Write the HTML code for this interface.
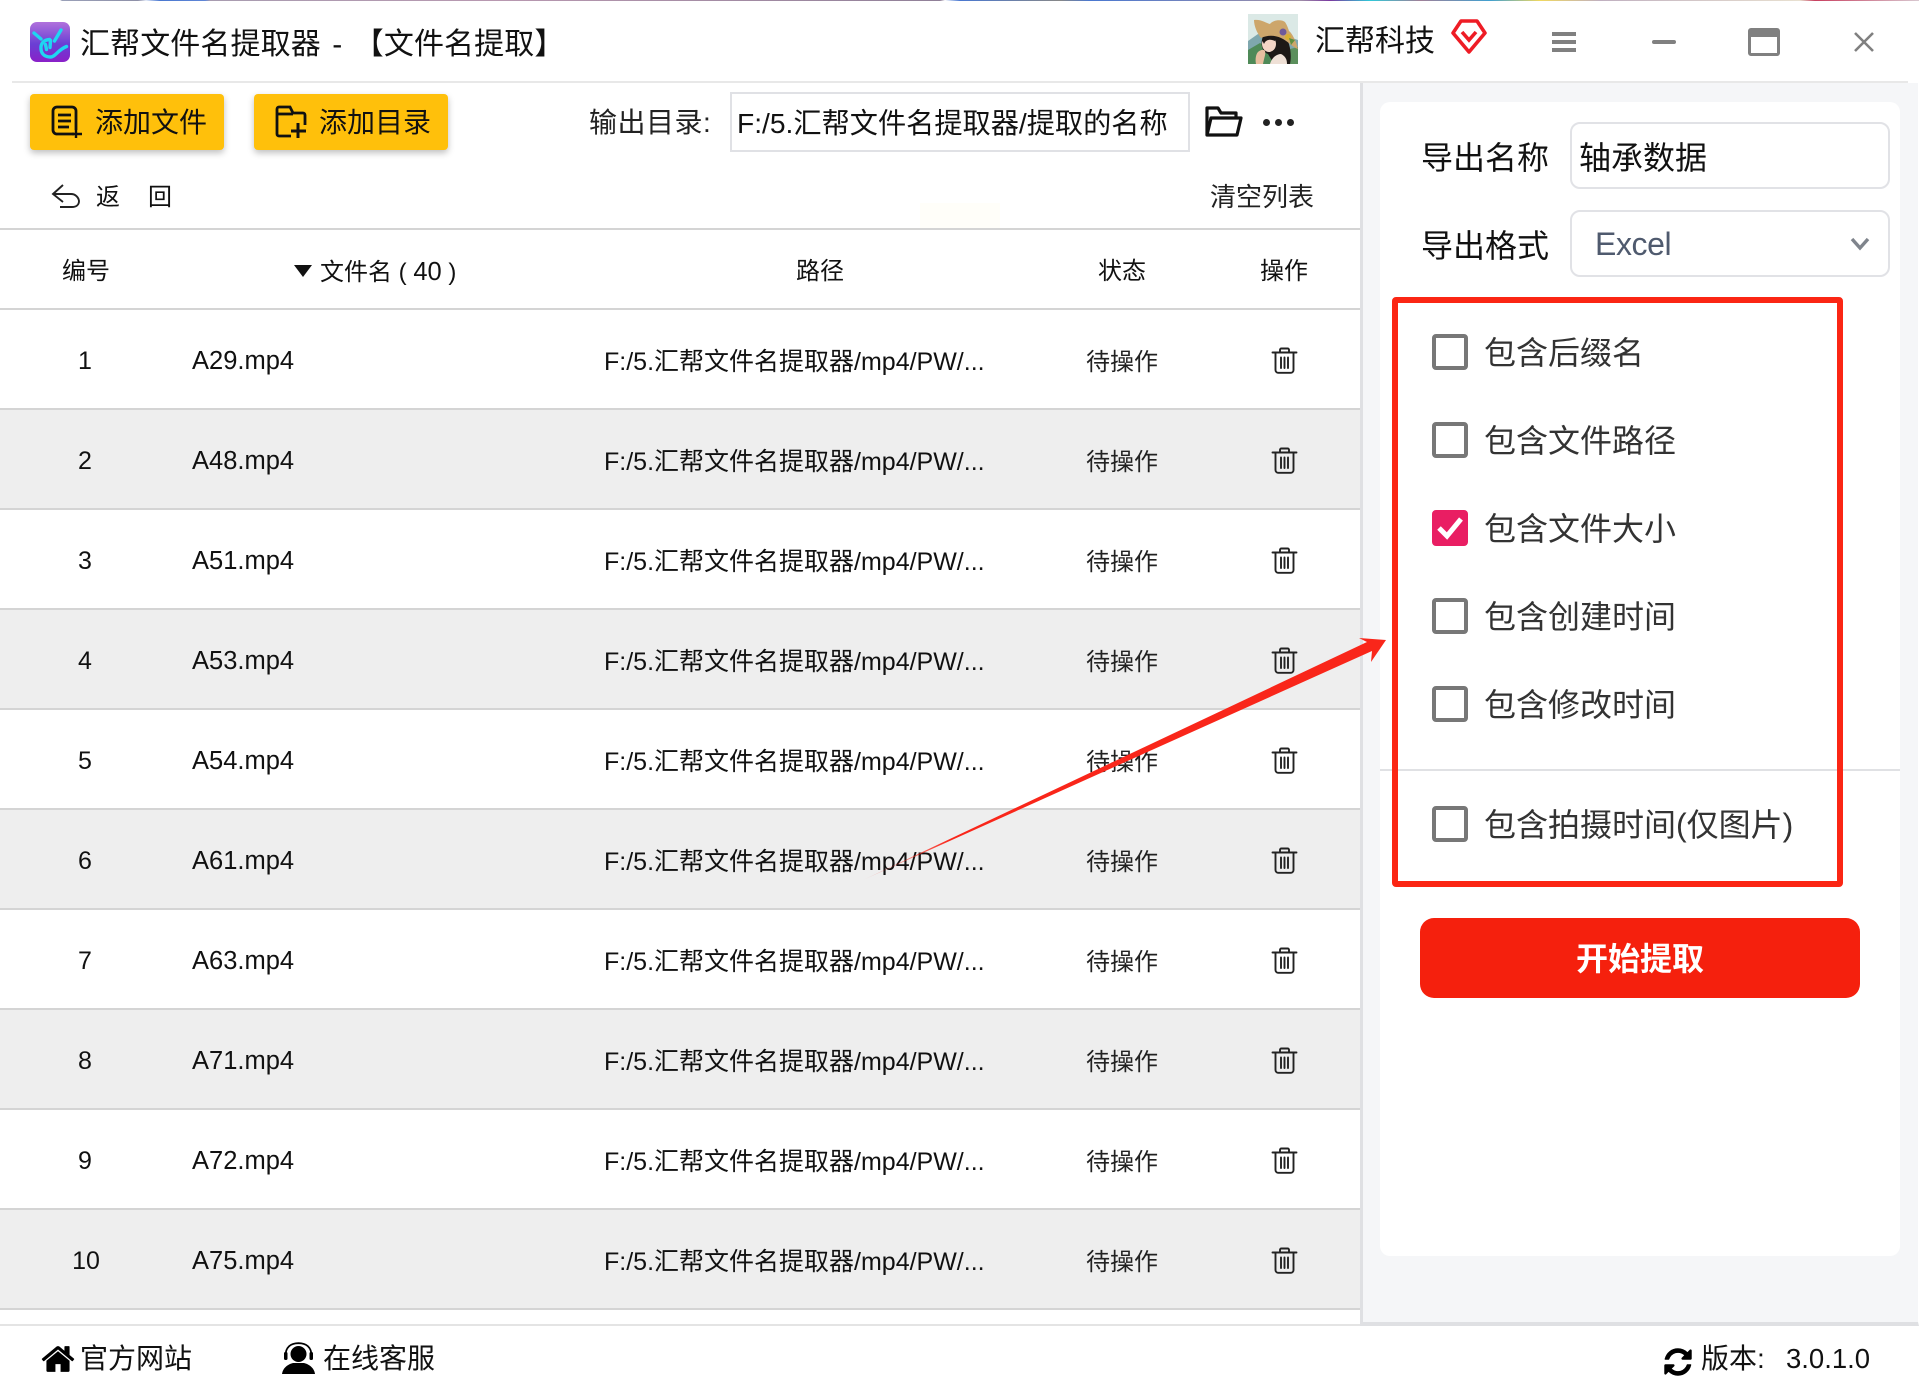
<!DOCTYPE html>
<html lang="zh-CN">
<head>
<meta charset="utf-8">
<title>汇帮文件名提取器</title>
<style>
html,body{margin:0;padding:0;background:#fff}
body{width:1919px;height:1391px;position:relative;overflow:hidden;font-family:"Liberation Sans","Noto Sans CJK SC",sans-serif;color:#111}
.a{position:absolute}
.t{position:absolute;white-space:nowrap;height:40px;line-height:40px}
.line{position:absolute;left:0;width:1360px;height:2px;background:#d4d4d4}
.btn{position:absolute;top:94px;width:194px;height:56px;background:#ffc00b;border-radius:4px;box-shadow:0 3px 7px rgba(0,0,0,.25)}
.row{position:absolute;left:0;width:1360px;height:100px;font-size:24px;border-bottom:0}
.row.g{background:#eeeeee}
.row .t{top:32px}
.row .n{left:45px;width:80px;text-align:center;font-size:25px;top:31px}
.row .f{left:192px;font-size:25.500px;top:31px}
.p{left:604px;font-size:25px}
.row .s{left:1086px;font-size:24px;color:#222;top:33px}
.row svg{position:absolute;left:1271px;top:37px}
.cb{position:absolute;left:1432px;width:36px;height:36px;box-sizing:border-box;border:4px solid #777;border-radius:4px;background:#fff}
.lb{position:absolute;left:1484px;font-size:32px;height:44px;line-height:46px;color:#333;white-space:nowrap}
</style>
</head>
<body>
<svg width="0" height="0" style="position:absolute"><defs>
<symbol id="tr" viewBox="0 0 27 27"><g fill="none" stroke="#222" stroke-width="1.900" stroke-linecap="round"><path d="M1.500 5.500H25.500"/><path d="M9 5.500V2.800a1.300 1.300 0 0 1 1.300-1.300h6.400a1.300 1.300 0 0 1 1.300 1.300V5.500"/><path d="M4.500 5.500V23a2.800 2.800 0 0 0 2.800 2.800h12.400a2.800 2.800 0 0 0 2.800-2.800V5.500"/><path d="M10 10.500V21M13.500 10.500V21M17 10.500V21"/></g></symbol>
</defs></svg>

<!-- top strip -->
<div class="a" style="left:0;top:0;width:1919px;height:1px;background:linear-gradient(90deg,#fff 0,#fff 60px,#9aa0b8 62px,#8e90a8 138px,#e6ecf8 146px,#4a78d0 160px,#5f86d6 205px,#a89cb0 210px,#b898b0 500px,#908098 940px,#fff 945px,#4a78d0 960px,#888 1060px,#4a78d0 1090px,#a090a8 1300px,#7a3aa0 1330px,#30c8d8 1370px,#a08098 1420px,#40a0d0 1490px,#f0d860 1540px,#c0b0c0 1600px,#e8e0d0 1800px,#c84060 1815px,#d8c8d0 1919px)"></div>

<!-- logo + title -->
<svg class="a" style="left:30px;top:22px" width="40" height="40" viewBox="0 0 40 40">
<defs><linearGradient id="lg" x1="0" y1="0" x2="0" y2="1"><stop offset="0" stop-color="#b071dc"/><stop offset=".55" stop-color="#6a3fd4"/><stop offset="1" stop-color="#8a20c8"/></linearGradient></defs>
<rect width="40" height="40" rx="7" fill="url(#lg)"/>
<g fill="none" stroke="#1fd6f2" stroke-width="3.400" stroke-linecap="round"><path d="M4 11l7 6"/><path d="M31 8l-6.500 11"/><path d="M19.500 17.500C14 18 10.500 21 11 27c.5 6 5 8 9.500 8 5 0 7-7 16-10.500"/><path d="M15.500 22.500l1 5M20.500 18.500l-.5 7"/></g>
</svg>
<div class="t" style="left:80px;top:25px;font-size:30px;word-spacing:3px;letter-spacing:.1px">汇帮文件名提取器 - 【文件名提取】</div>

<!-- avatar -->
<svg class="a" style="left:1248px;top:14px" width="50" height="50" viewBox="0 0 50 50">
<rect width="50" height="50" fill="#dbe9e6"/>
<path d="M0 27L10 20 22 26 38 22 50 26V50H0Z" fill="#7fa7ae"/>
<path d="M0 36L12 29 24 36 24 50H0Z" fill="#4f8a58"/>
<path d="M38 36L50 33V50H38Z" fill="#5b8f5c"/>
<path d="M15 22C12 30 14 38 20 40L26 50H42C44 40 42 28 36 20Z" fill="#1d1816"/>
<path d="M22 50c2-7 7-10 11-10 4 2 6 5 6 10z" fill="#efe0d6"/>
<ellipse cx="21" cy="30" rx="7" ry="8" fill="#f3d5c6"/>
<path d="M8 50c-1-5 0-10 2-12 2-2 6-3 7-1 1 3-1 7-2 13z" fill="#e8bfa0"/>
<path d="M14 26c3-5 10-6 14-3l-1 4c-4-2-9-2-11 3z" fill="#1d1816"/>
<path d="M6 6C13 5 18 9 22 10 25 6 33 5 37 8 39 11 40 14 41 17 45 20 49 30 50 35 44 33 40 27 33 24 27 21 19 21 13 24 9 19 6 12 6 6Z" fill="#cda66b"/>
<circle cx="35" cy="18" r="3.500" fill="#6e5a9a"/><circle cx="40" cy="23" r="3" fill="#d8b030"/><path d="M41 24l6 2-4 5z" fill="#5e8f3f"/>
</svg>
<div class="t" style="left:1315px;top:22px;font-size:30px">汇帮科技</div>
<svg class="a" style="left:1451px;top:19px" width="36" height="36" viewBox="0 0 36 36"><path d="M10 2H26L34 14 18 33 2 14Z" fill="#fff" stroke="#ee1c25" stroke-width="3.600" stroke-linejoin="round"/><path d="M11 13l7 8 7-8" fill="none" stroke="#ee1c25" stroke-width="3.600"/></svg>
<div class="a" style="left:1552px;top:32px;width:24px;height:20px;background:repeating-linear-gradient(180deg,#808080 0,#808080 4px,transparent 4px,transparent 8px)"></div>
<div class="a" style="left:1652px;top:40px;width:24px;height:4px;background:#808080;border-radius:2px"></div>
<div class="a" style="left:1748px;top:28px;width:32px;height:28px;box-sizing:border-box;border:3px solid #808080;border-top-width:9px;border-radius:3px"></div>
<svg class="a" style="left:1853px;top:32px" width="22" height="20" viewBox="0 0 22 20"><path d="M2 1L20 19M20 1L2 19" stroke="#808080" stroke-width="2.600"/></svg>
<div class="a" style="left:12px;top:81px;width:1896px;height:2px;background:#e8e8e8"></div>

<!-- toolbar -->
<div class="btn" style="left:30px"></div>
<div class="btn" style="left:254px"></div>
<svg class="a" style="left:50px;top:105px" width="33" height="34" viewBox="0 0 33 34" fill="none" stroke="#111" stroke-width="2.800"><path d="M24 29H7a4 4 0 0 1-4-4V6a4 4 0 0 1 4-4h15a4 4 0 0 1 4 4v19"/><path d="M8 10H21M8 16H21M8 22H19"/><path d="M26 25V33M22 29H32" stroke-width="2.400"/></svg>
<svg class="a" style="left:274px;top:105px" width="34" height="34" viewBox="0 0 34 34" fill="none" stroke="#111" stroke-width="2.800"><path d="M17 31H5a2 2 0 0 1-2-2V4a2 2 0 0 1 2-2h11l3 6h10a2 2 0 0 1 2 2v10"/><path d="M3 9H19"/><path d="M24 18V33M17 26H32" stroke-width="3"/></svg>
<div class="t" style="left:95px;top:103px;font-size:28px">添加文件</div>
<div class="t" style="left:319px;top:103px;font-size:28px">添加目录</div>
<div class="t" style="left:589px;top:103px;font-size:28px;color:#222;letter-spacing:.5px">输出目录:</div>
<div class="a" style="left:730px;top:92px;width:460px;height:60px;box-sizing:border-box;border:2px solid #e0e1e5"></div>
<div class="t" style="left:737px;top:103px;font-size:28.200px">F:/5.汇帮文件名提取器/提取的名称</div>
<svg class="a" style="left:1205px;top:106px" width="38" height="32" viewBox="0 0 38 32" fill="none" stroke="#111" stroke-width="3.200" stroke-linejoin="round"><path d="M2 29V2h11l3 5h15v5"/><path d="M2 29L6 12H36L32 29Z"/></svg>
<div class="a" style="left:1263px;top:119px;width:7px;height:7px;border-radius:50%;background:#222;box-shadow:12px 0 0 #222,24px 0 0 #222"></div>

<svg class="a" style="left:51px;top:183px" width="30" height="26" viewBox="0 0 30 26" fill="none" stroke="#222" stroke-width="1.900"><path d="M12 2L2 11l10 8"/><path d="M2 11H20a8 8 0 0 1 8 7c0 4-3 6-7 6H9"/></svg>
<div class="t" style="left:96px;top:178px;font-size:24px">返</div>
<div class="t" style="left:148px;top:178px;font-size:24px">回</div>
<div class="t" style="left:1210px;top:177px;font-size:26px;color:#222">清空列表</div>
<div class="a" style="left:920px;top:203px;width:80px;height:25px;background:#fffef9"></div>

<!-- table header -->
<div class="line" style="top:228px"></div>
<div class="t" style="left:62px;top:252px;font-size:24px">编号</div>
<svg class="a" style="left:294px;top:265px" width="18" height="12" viewBox="0 0 18 12"><path d="M0 0H18L9 12Z" fill="#111"/></svg>
<div class="t" style="left:320px;top:252px;font-size:24px">文件名 ( <span style="font-size:25.500px">40</span> )</div>
<div class="t" style="left:796px;top:252px;font-size:24px">路径</div>
<div class="t" style="left:1098px;top:252px;font-size:24px">状态</div>
<div class="t" style="left:1260px;top:252px;font-size:24px">操作</div>
<div class="line" style="top:308px"></div>

<!-- rows -->
<div class="row" style="top:310px"><div class="t n">1</div><div class="t f">A29.mp4</div><div class="t p">F:/5.汇帮文件名提取器/mp4/PW/...</div><div class="t s">待操作</div><svg width="27" height="27"><use href="#tr"/></svg></div>
<div class="line" style="top:408px"></div>
<div class="row g" style="top:410px"><div class="t n">2</div><div class="t f">A48.mp4</div><div class="t p">F:/5.汇帮文件名提取器/mp4/PW/...</div><div class="t s">待操作</div><svg width="27" height="27"><use href="#tr"/></svg></div>
<div class="line" style="top:508px"></div>
<div class="row" style="top:510px"><div class="t n">3</div><div class="t f">A51.mp4</div><div class="t p">F:/5.汇帮文件名提取器/mp4/PW/...</div><div class="t s">待操作</div><svg width="27" height="27"><use href="#tr"/></svg></div>
<div class="line" style="top:608px"></div>
<div class="row g" style="top:610px"><div class="t n">4</div><div class="t f">A53.mp4</div><div class="t p">F:/5.汇帮文件名提取器/mp4/PW/...</div><div class="t s">待操作</div><svg width="27" height="27"><use href="#tr"/></svg></div>
<div class="line" style="top:708px"></div>
<div class="row" style="top:710px"><div class="t n">5</div><div class="t f">A54.mp4</div><div class="t p">F:/5.汇帮文件名提取器/mp4/PW/...</div><div class="t s">待操作</div><svg width="27" height="27"><use href="#tr"/></svg></div>
<div class="line" style="top:808px"></div>
<div class="row g" style="top:810px"><div class="t n">6</div><div class="t f">A61.mp4</div><div class="t p">F:/5.汇帮文件名提取器/mp4/PW/...</div><div class="t s">待操作</div><svg width="27" height="27"><use href="#tr"/></svg></div>
<div class="line" style="top:908px"></div>
<div class="row" style="top:910px"><div class="t n">7</div><div class="t f">A63.mp4</div><div class="t p">F:/5.汇帮文件名提取器/mp4/PW/...</div><div class="t s">待操作</div><svg width="27" height="27"><use href="#tr"/></svg></div>
<div class="line" style="top:1008px"></div>
<div class="row g" style="top:1010px"><div class="t n">8</div><div class="t f">A71.mp4</div><div class="t p">F:/5.汇帮文件名提取器/mp4/PW/...</div><div class="t s">待操作</div><svg width="27" height="27"><use href="#tr"/></svg></div>
<div class="line" style="top:1108px"></div>
<div class="row" style="top:1110px"><div class="t n">9</div><div class="t f">A72.mp4</div><div class="t p">F:/5.汇帮文件名提取器/mp4/PW/...</div><div class="t s">待操作</div><svg width="27" height="27"><use href="#tr"/></svg></div>
<div class="line" style="top:1208px"></div>
<div class="row g" style="top:1210px;height:98px"><div class="t n" style="left:46px">10</div><div class="t f">A75.mp4</div><div class="t p">F:/5.汇帮文件名提取器/mp4/PW/...</div><div class="t s">待操作</div><svg width="27" height="27"><use href="#tr"/></svg></div>
<div class="line" style="top:1308px"></div>

<!-- right panel -->
<div class="a" style="left:1360px;top:83px;width:559px;height:1243px;box-sizing:border-box;background:#f5f6f8;border-left:3px solid #dfe0e3;border-bottom:4px solid #dfe0e3;border-right:1px solid #fff"></div>
<div class="a" style="left:1380px;top:102px;width:520px;height:1154px;background:#fff;border-radius:10px"></div>
<div class="t" style="left:1421px;top:138px;font-size:32px;color:#111">导出名称</div>
<div class="a" style="left:1570px;top:122px;width:320px;height:67px;box-sizing:border-box;border:2px solid #e1e2e6;border-radius:10px;background:#fff"></div>
<div class="t" style="left:1579px;top:138px;font-size:32px;color:#111">轴承数据</div>
<div class="t" style="left:1421px;top:226px;font-size:32px;color:#111">导出格式</div>
<div class="a" style="left:1570px;top:210px;width:320px;height:67px;box-sizing:border-box;border:2px solid #e1e2e6;border-radius:10px;background:#fff"></div>
<div class="t" style="left:1595px;top:224px;font-size:32px;color:#4f5a6e;letter-spacing:-.4px">Excel</div>
<svg class="a" style="left:1850px;top:236px" width="20" height="15" viewBox="0 0 20 15"><path d="M2 3l8 9 8-9" fill="none" stroke="#7f848c" stroke-width="3.400"/></svg>

<div class="a" style="left:1380px;top:769px;width:520px;height:2px;background:#e0e1e4"></div>
<div class="a" style="left:1392px;top:297px;width:451px;height:590px;box-sizing:border-box;border:6px solid #fb2614;border-radius:4px"></div>

<div class="cb" style="top:334px"></div><div class="lb" style="top:330px">包含后缀名</div>
<div class="cb" style="top:422px"></div><div class="lb" style="top:418px">包含文件路径</div>
<div class="cb" style="top:510px;background:#e91e63;border-color:#e91e63"></div>
<svg class="a" style="left:1436px;top:516px" width="28" height="24" viewBox="0 0 28 24"><path d="M3 12l8 8L25 3" fill="none" stroke="#fff" stroke-width="5"/></svg>
<div class="lb" style="top:506px">包含文件大小</div>
<div class="cb" style="top:598px"></div><div class="lb" style="top:594px">包含创建时间</div>
<div class="cb" style="top:686px"></div><div class="lb" style="top:682px">包含修改时间</div>
<div class="cb" style="top:806px"></div><div class="lb" style="top:802px">包含拍摄时间(仅图片)</div>

<div class="a" style="left:1420px;top:918px;width:440px;height:80px;background:#f5200d;border-radius:14px;color:#fff;font-weight:700;font-size:32px;line-height:82px;text-align:center">开始提取</div>

<!-- arrow -->
<svg class="a" style="left:0;top:0;pointer-events:none" width="1919" height="1391" viewBox="0 0 1919 1391">
<defs><linearGradient id="ar" gradientUnits="userSpaceOnUse" x1="863" y1="880" x2="950" y2="838"><stop offset="0" stop-color="#f9261a" stop-opacity=".1"/><stop offset="1" stop-color="#f9261a"/></linearGradient></defs>
<path d="M863 880L1367 642 1359 638 1386 640 1371 662 1372 651Z" fill="url(#ar)"/>
</svg>

<!-- footer -->
<div class="a" style="left:0;top:1324px;width:1360px;height:2px;background:#e4e4e4"></div>
<svg class="a" style="left:40px;top:1341px" width="36" height="36" viewBox="0 0 1792 1792"><path fill="#000" d="M1472 992v480q0 26-19 45t-45 19h-384v-384h-256v384h-384q-26 0-45-19t-19-45v-480q0-1 .5-3t.5-3l575-474 575 474q1 2 1 6zm223-69l-62 74q-8 9-21 11h-3q-13 0-21-7l-692-577-692 577q-12 8-24 7-13-2-21-11l-62-74q-8-10-7-23.5t11-21.5l719-599q32-26 76-26t76 26l244 204v-195q0-14 9-23t23-9h192q14 0 23 9t9 23v408l219 182q10 8 11 21.5t-7 23.5z"/></svg>
<div class="t" style="left:80px;top:1339px;font-size:28px">官方网站</div>
<svg class="a" style="left:282px;top:1342px" width="33" height="32" viewBox="0 0 33 32"><circle cx="16.5" cy="12" r="8" fill="#000"/><path d="M3.500 14C3.500 5 9 1.200 16.500 1.200S29.500 5 29.500 14" fill="none" stroke="#000" stroke-width="1.800"/><rect x="2" y="10" width="3.500" height="8" rx="1.500" fill="#000"/><rect x="27.500" y="10" width="3.500" height="8" rx="1.500" fill="#000"/><path d="M0 32C1 25 7 22 11 21h11c4 1 10 4 11 11Z" fill="#000"/></svg>
<div class="t" style="left:323px;top:1339px;font-size:28px">在线客服</div>
<svg class="a" style="left:1662px;top:1346px" width="32" height="32" viewBox="0 0 1792 1792"><path fill="#000" d="M1639 1056q0 5-1 7-64 268-268 434.500t-478 166.500q-146 0-282.500-55t-243.500-157l-129 129q-19 19-45 19t-45-19-19-45v-448q0-26 19-45t45-19h448q26 0 45 19t19 45-19 45l-137 137q71 66 161 102t187 36q134 0 250-65t186-179q11-17 53-117 8-23 30-23h192q13 0 22.500 9.500t9.500 22.500zm25-800v448q0 26-19 45t-45 19h-448q-26 0-45-19t-19-45 19-45l138-138q-148-137-349-137-134 0-250 65t-186 179q-11 17-53 117-8 23-30 23h-199q-13 0-22.500-9.500t-9.500-22.500v-7q65-268 270-434.500t480-166.500q146 0 284 55.500t245 156.500l130-129q19-19 45-19t45 19 19 45z"/></svg>
<div class="t" style="left:1701px;top:1339px;font-size:28px">版本:</div>
<div class="t" style="left:1786px;top:1339px;font-size:27.500px">3.0.1.0</div>
</body>
</html>
